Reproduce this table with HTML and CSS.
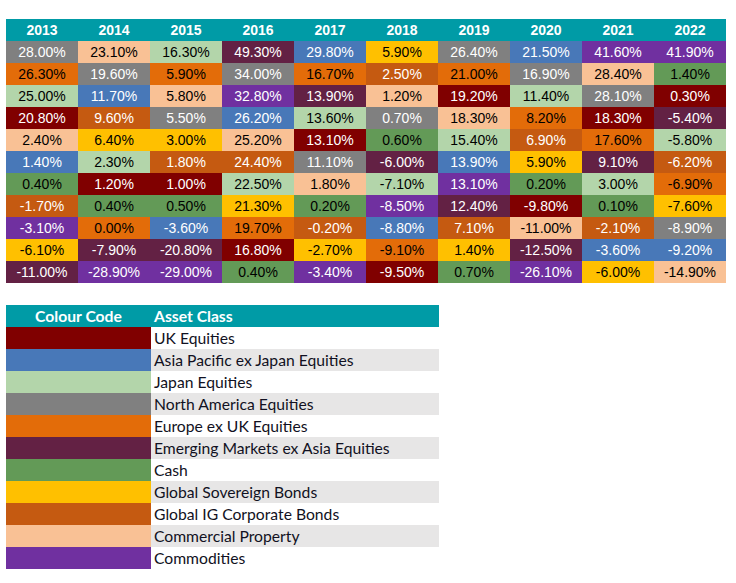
FILE: index.html
```html
<!DOCTYPE html>
<html lang="en">
<head>
<meta charset="utf-8">
<title>Asset Class Returns</title>
<link rel="stylesheet" href="styles.css">
</head>
<body>
<div class="returns">
  <div class="hd">2013</div><div class="hd">2014</div><div class="hd">2015</div><div class="hd">2016</div><div class="hd">2017</div><div class="hd">2018</div><div class="hd">2019</div><div class="hd">2020</div><div class="hd">2021</div><div class="hd">2022</div>

  <div class="c na">28.00%</div><div class="c cp">23.10%</div><div class="c jp">16.30%</div><div class="c em">49.30%</div><div class="c ap">29.80%</div><div class="c sv">5.90%</div><div class="c na">26.40%</div><div class="c ap">21.50%</div><div class="c co">41.60%</div><div class="c co">41.90%</div>

  <div class="c eu">26.30%</div><div class="c na">19.60%</div><div class="c eu">5.90%</div><div class="c na">34.00%</div><div class="c eu">16.70%</div><div class="c ig">2.50%</div><div class="c eu">21.00%</div><div class="c na">16.90%</div><div class="c cp">28.40%</div><div class="c ca">1.40%</div>

  <div class="c jp">25.00%</div><div class="c ap">11.70%</div><div class="c cp">5.80%</div><div class="c co">32.80%</div><div class="c em">13.90%</div><div class="c cp">1.20%</div><div class="c uk">19.20%</div><div class="c jp">11.40%</div><div class="c na">28.10%</div><div class="c uk">0.30%</div>

  <div class="c uk">20.80%</div><div class="c ig">9.60%</div><div class="c na">5.50%</div><div class="c ap">26.20%</div><div class="c jp">13.60%</div><div class="c na">0.70%</div><div class="c cp">18.30%</div><div class="c eu">8.20%</div><div class="c uk">18.30%</div><div class="c em">-5.40%</div>

  <div class="c cp">2.40%</div><div class="c sv">6.40%</div><div class="c sv">3.00%</div><div class="c cp">25.20%</div><div class="c uk">13.10%</div><div class="c ca">0.60%</div><div class="c jp">15.40%</div><div class="c ig">6.90%</div><div class="c eu">17.60%</div><div class="c jp">-5.80%</div>

  <div class="c ap">1.40%</div><div class="c jp">2.30%</div><div class="c ig">1.80%</div><div class="c ig">24.40%</div><div class="c na">11.10%</div><div class="c em">-6.00%</div><div class="c ap">13.90%</div><div class="c sv">5.90%</div><div class="c em">9.10%</div><div class="c ig">-6.20%</div>

  <div class="c ca">0.40%</div><div class="c uk">1.20%</div><div class="c uk">1.00%</div><div class="c jp">22.50%</div><div class="c cp">1.80%</div><div class="c jp">-7.10%</div><div class="c co">13.10%</div><div class="c ca">0.20%</div><div class="c jp">3.00%</div><div class="c eu">-6.90%</div>

  <div class="c ig">-1.70%</div><div class="c ca">0.40%</div><div class="c ca">0.50%</div><div class="c sv">21.30%</div><div class="c ca">0.20%</div><div class="c co">-8.50%</div><div class="c em">12.40%</div><div class="c uk">-9.80%</div><div class="c ca">0.10%</div><div class="c sv">-7.60%</div>

  <div class="c co">-3.10%</div><div class="c eu">0.00%</div><div class="c ap">-3.60%</div><div class="c eu">19.70%</div><div class="c ig">-0.20%</div><div class="c ap">-8.80%</div><div class="c ig">7.10%</div><div class="c cp">-11.00%</div><div class="c ig">-2.10%</div><div class="c na">-8.90%</div>

  <div class="c sv">-6.10%</div><div class="c em">-7.90%</div><div class="c em">-20.80%</div><div class="c uk">16.80%</div><div class="c sv">-2.70%</div><div class="c eu">-9.10%</div><div class="c sv">1.40%</div><div class="c em">-12.50%</div><div class="c ap">-3.60%</div><div class="c ap">-9.20%</div>

  <div class="c em">-11.00%</div><div class="c co">-28.90%</div><div class="c co">-29.00%</div><div class="c ca">0.40%</div><div class="c co">-3.40%</div><div class="c uk">-9.50%</div><div class="c ca">0.70%</div><div class="c co">-26.10%</div><div class="c sv">-6.00%</div><div class="c cp">-14.90%</div>
</div>

<div class="legend">
  <div class="lh code">Colour Code</div><div class="lh name">Asset Class</div>
  <div class="sw uk"></div><div class="ln">UK Equities</div>
  <div class="sw ap"></div><div class="ln alt">Asia Pacific ex Japan Equities</div>
  <div class="sw jp"></div><div class="ln">Japan Equities</div>
  <div class="sw na"></div><div class="ln alt">North America Equities</div>
  <div class="sw eu"></div><div class="ln">Europe ex UK Equities</div>
  <div class="sw em"></div><div class="ln alt">Emerging Markets ex Asia Equities</div>
  <div class="sw ca"></div><div class="ln">Cash</div>
  <div class="sw sv"></div><div class="ln alt">Global Sovereign Bonds</div>
  <div class="sw ig"></div><div class="ln">Global IG Corporate Bonds</div>
  <div class="sw cp"></div><div class="ln alt">Commercial Property</div>
  <div class="sw co"></div><div class="ln">Commodities</div>
</div>
</body>
</html>
```

FILE: styles.css
```css
html, body {
  margin: 0;
  padding: 0;
  background: #ffffff;
}

body {
  padding: 19px 0 0 6px;
}

.returns {
  display: grid;
  grid-template-columns: repeat(10, 72px);
  grid-auto-rows: 22px;
  font-family: "Liberation Sans", Arial, sans-serif;
  font-size: 14px;
}

.hd {
  background: #009ba6;
  color: #ffffff;
  font-weight: bold;
  display: flex;
  align-items: center;
  justify-content: center;
}

.c {
  display: flex;
  align-items: center;
  justify-content: center;
  color: #000000;
}

.uk { background: #800000; color: #ffffff; }
.ap { background: #4878b8; color: #ffffff; }
.jp { background: #b3d5aa; }
.na { background: #808080; color: #ffffff; }
.eu { background: #e36c09; }
.em { background: #632144; color: #ffffff; }
.ca { background: #639a57; }
.sv { background: #ffc000; }
.ig { background: #c55a11; color: #ffffff; }
.cp { background: #f9c195; }
.co { background: #7030a0; color: #ffffff; }

.legend {
  margin-top: 22px;
  display: grid;
  grid-template-columns: 145px 288px;
  grid-auto-rows: 22px;
  font-family: Lato, "Liberation Sans", sans-serif;
  font-size: 15.7px;
  color: #111122;
}

.lh {
  background: #009ba6;
  color: #ffffff;
  font-weight: bold;
  display: flex;
  align-items: center;
}

.lh.code {
  justify-content: center;
}

.lh.name {
  padding-left: 3px;
}

.ln {
  display: flex;
  align-items: center;
  padding-left: 3px;
  background: #ffffff;
}

.ln.alt {
  background: #e7e6e6;
}
```
